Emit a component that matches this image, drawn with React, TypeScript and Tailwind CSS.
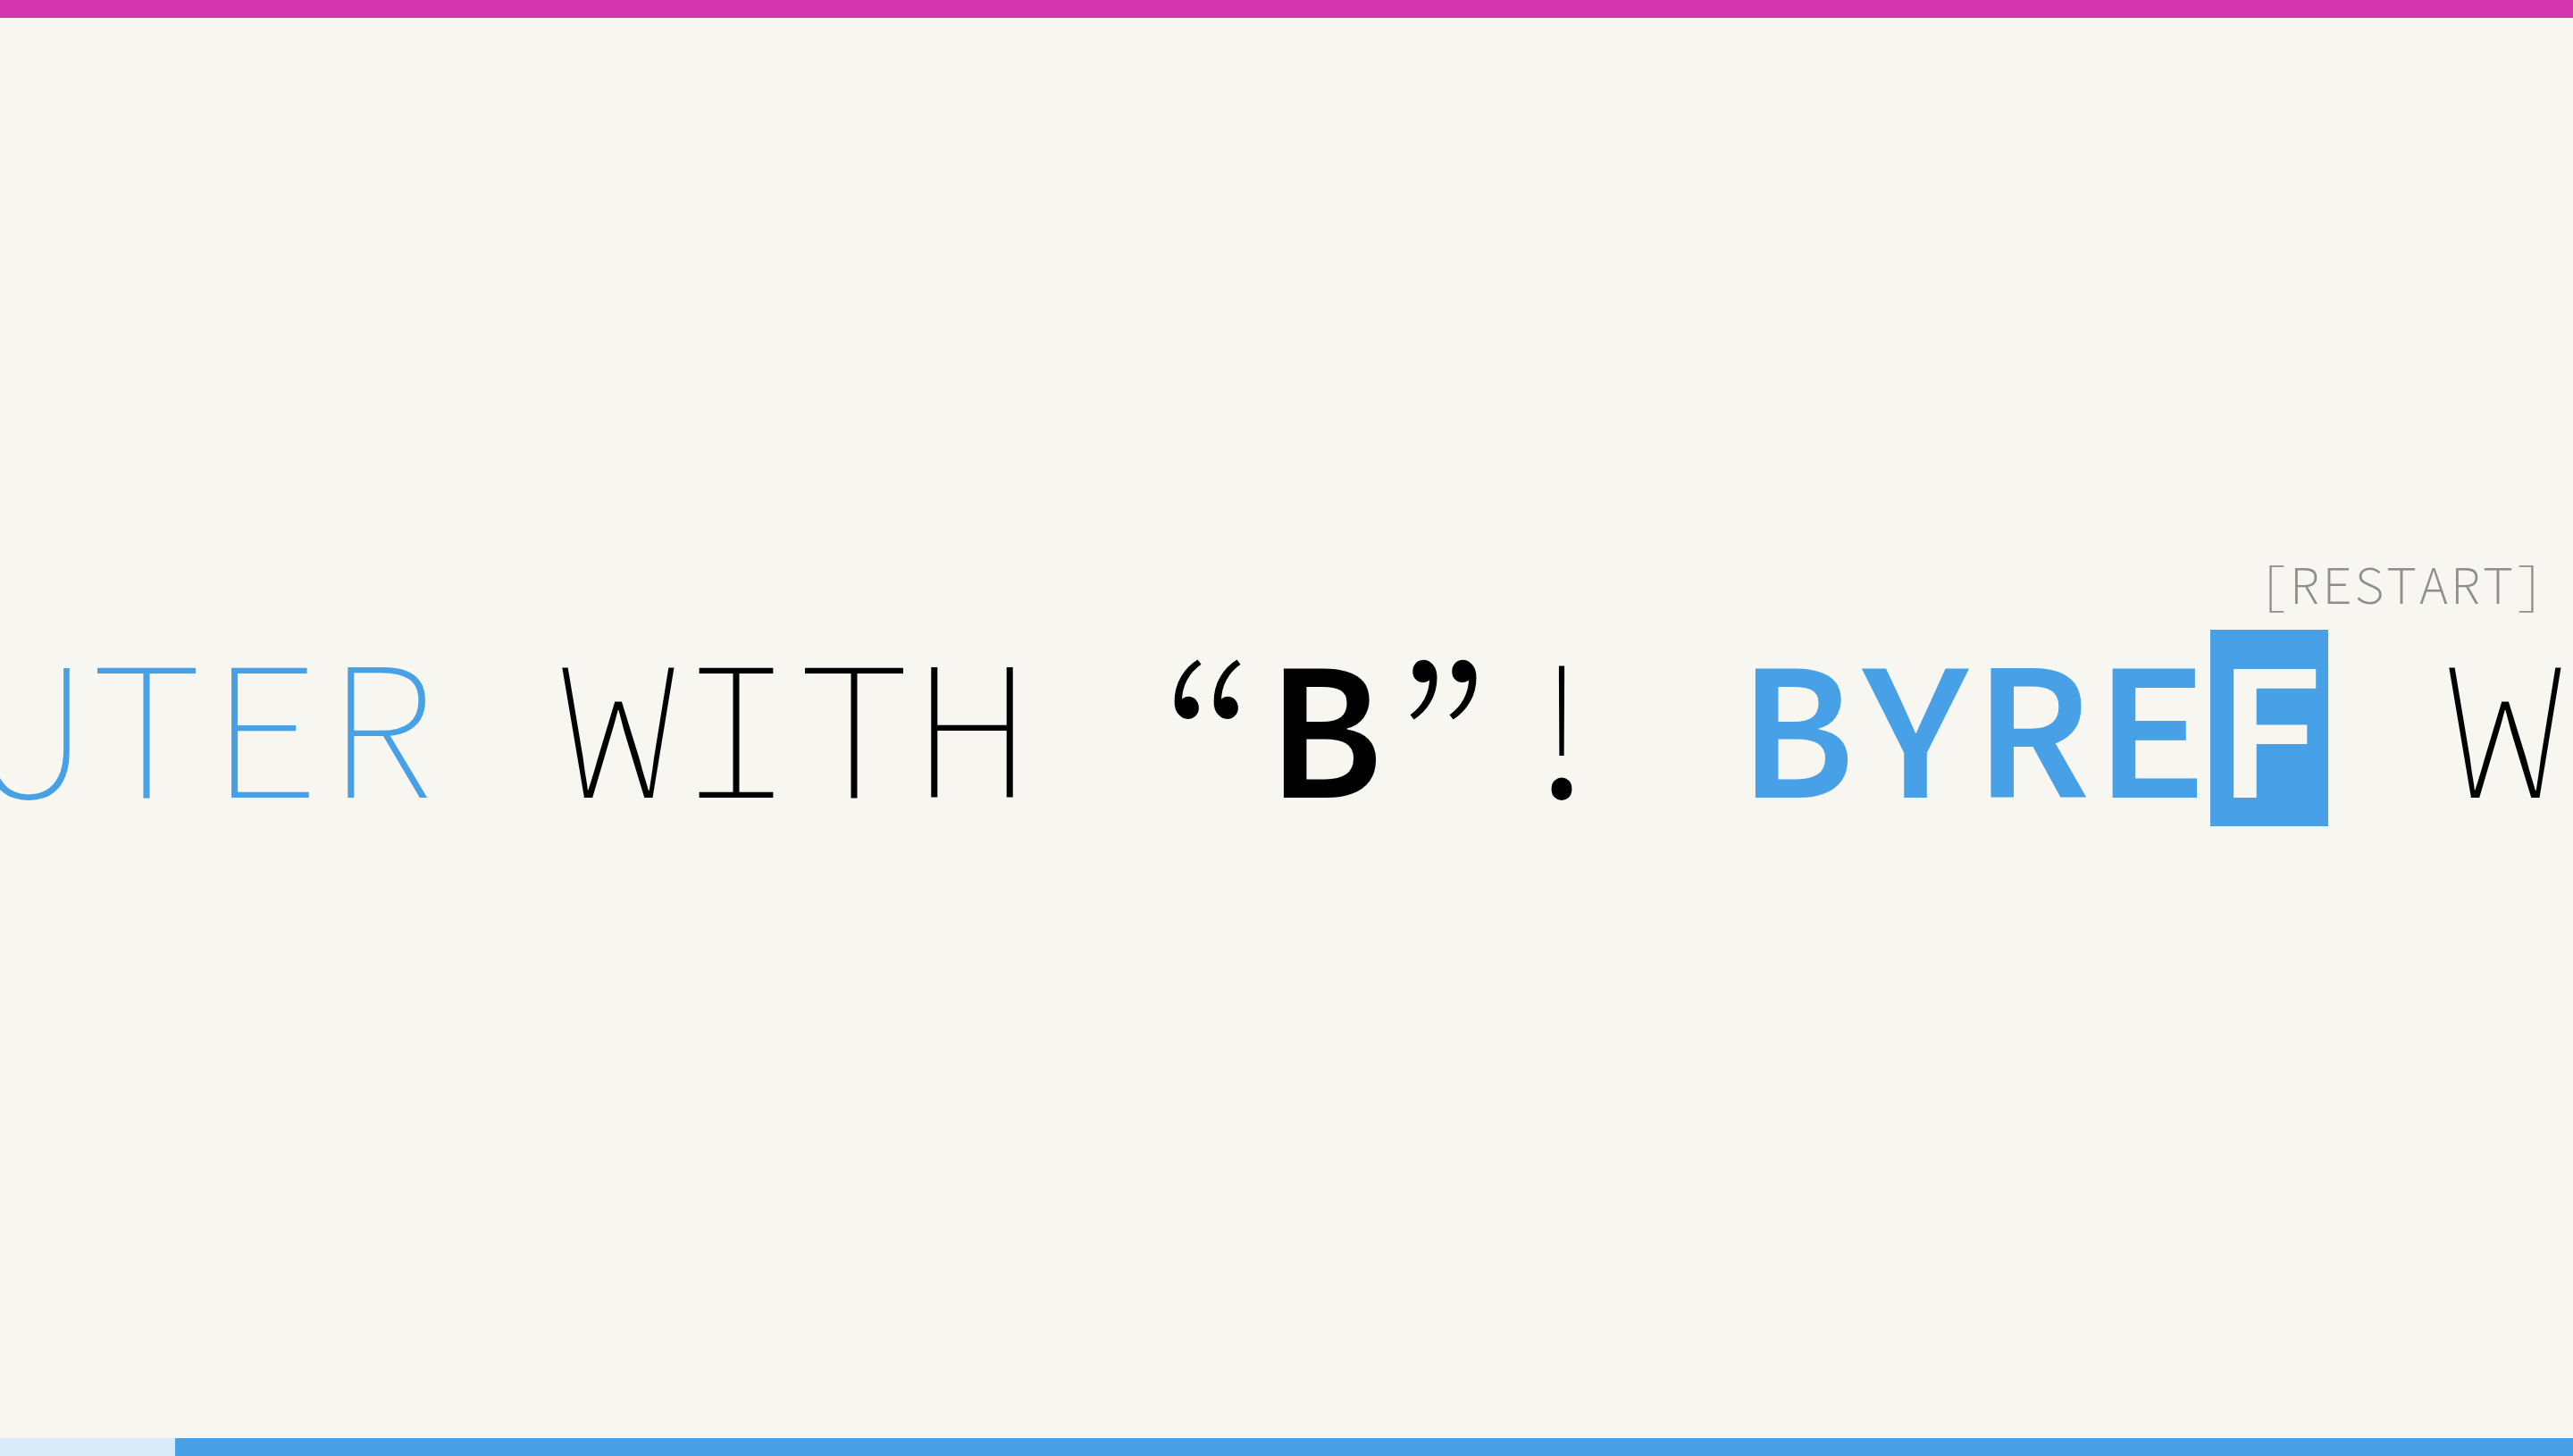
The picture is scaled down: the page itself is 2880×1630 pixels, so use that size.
type Word = { text: string; className: string; cursor?: boolean };

const words: Word[] = [
  { text: "UTER", className: "font-extralight text-[#48a0e7]" },
  { text: " WITH “", className: "font-extralight text-black" },
  { text: "B", className: "font-semibold text-black" },
  { text: "”! ", className: "font-extralight text-black" },
  { text: "BYRE", className: "font-semibold text-[#48a0e7]" },
  { text: "F", className: "font-semibold bg-[#48a0e7] text-[#f8f6f1]", cursor: true },
  { text: " W", className: "font-extralight text-black" },
];

function Ticker() {
  return (
    <p className="flex justify-end overflow-hidden whitespace-pre pr-[10px] text-[220px] leading-none">
      {words.map((word, i) => (
        <span key={i} className={word.className} aria-current={word.cursor ? "true" : undefined}>
          {word.text}
        </span>
      ))}
    </p>
  );
}

export default function App() {
  return (
    <div className="flex h-screen flex-col overflow-hidden bg-[#f8f6f1] font-['Source_Code_Pro','Noto_Sans_Mono_CJK_SC','Liberation_Mono',monospace]">
      <header className="h-5 shrink-0 bg-[#d336ae]" />
      <main className="grid min-h-0 flex-1 grid-cols-1 grid-rows-[1fr_auto_1fr]">
        <div className="flex items-end justify-end px-[30px] pb-3">
          <button type="button" className="text-[60px] font-light leading-[76px] text-[#8e8e8e]">
            [RESTART]
          </button>
        </div>
        <Ticker />
        <div />
      </main>
      <footer className="flex h-5 shrink-0 bg-[#48a0e7]" role="progressbar" aria-label="Progress">
        <div className="w-[6.8%] bg-[#d9ebf9]" />
      </footer>
    </div>
  );
}
